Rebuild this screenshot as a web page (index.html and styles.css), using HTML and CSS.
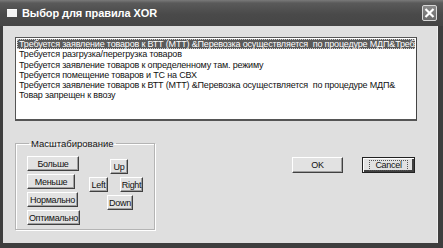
FILE: index.html
```html
<!DOCTYPE html>
<html lang="ru">
<head>
    <meta charset="UTF-8">
    <meta name="viewport" content="width=device-width, initial-scale=1.0">
    <title>Выбор для правила XOR</title>
    <link rel="stylesheet" href="styles.css">
</head>
<body>
    <div class="window">
        <div class="titlebar">
            <span class="app-icon"></span>
            <span class="title">Выбор для правила XOR</span>
            <div class="close">
                <svg width="11" height="10" viewBox="0 0 11 10">
                    <path d="M1.5 1 L9.5 9 M9.5 1 L1.5 9" stroke="#fff" stroke-width="2.2" fill="none"/>
                </svg>
            </div>
        </div>

        <div class="body">
            <ul class="list">
                <li class="selected">Требуется заявление товаров к ВТТ (МТТ) &amp;Перевозка осуществляется&nbsp; по процедуре МДП&amp;Треб</li>
                <li>Требуется разгрузка/перегрузка товаров</li>
                <li>Требуется заявление товаров к определенному там. режиму</li>
                <li>Требуется помещение товаров и ТС на СВХ</li>
                <li>Требуется заявление товаров к ВТТ (МТТ) &amp;Перевозка осуществляется&nbsp; по процедуре МДП&amp;</li>
                <li>Товар запрещен к ввозу</li>
            </ul>

            <div class="bottom">
                <fieldset class="group">
                    <legend>Масштабирование</legend>
                    <div class="zoom-btns">
                        <div class="btn w-more">Больше</div>
                        <div class="btn w-less">Меньше</div>
                        <div class="btn w-norm">Нормально</div>
                        <div class="btn w-opt">Оптимально</div>
                    </div>
                    <div class="arrows">
                        <div class="btn up">Up</div>
                        <div class="arrow-row">
                            <div class="btn left">Left</div>
                            <div class="btn right">Right</div>
                        </div>
                        <div class="btn down">Down</div>
                    </div>
                </fieldset>

                <div class="actions">
                    <div class="btn ok">OK</div>
                    <div class="btn cancel"><span class="focus">Cancel</span></div>
                </div>
            </div>
        </div>
    </div>
</body>
</html>
```

FILE: styles.css
```css
body {
    margin: 0;
    padding: 0;
    background: #3a3a3a;
    font-family: "Liberation Sans", Arial, sans-serif;
}
.window {
    width: 443px;
    height: 248px;
    box-sizing: border-box;
    background: #3e3e3e;
    padding: 0 5px 5px 3px;
    display: flex;
    flex-direction: column;
}
.titlebar {
    height: 26px;
    margin: 0 -5px 0 -3px;
    padding: 0 5px 0 7px;
    display: flex;
    align-items: center;
    background: linear-gradient(#7a7a7a 0, #5a5a5a 3px, #4a4a4a 14px, #454545 100%);
    color: #fff;
}
.app-icon {
    width: 10px;
    height: 7px;
    background: #f4f4f4;
    border-top: 1px solid #fff;
    margin-right: 5px;
}
.title {
    font-weight: bold;
    font-size: 11px;
    letter-spacing: -0.1px;
    flex: 1;
}
.close {
    width: 15px;
    height: 16px;
    box-sizing: border-box;
    border: 1px solid #d8d8d8;
    border-radius: 2px;
    background: linear-gradient(#8a8a8a, #6a6a6a);
    display: flex;
    align-items: center;
    justify-content: center;
    margin-right: 1px;
}
.body {
    flex: 1;
    background: #dfdfdf;
    border-right: 1px solid #efefef;
    padding: 11px 20px 0 12px;
}
.list {
    list-style: none;
    margin: 0;
    padding: 1px 1px;
    height: 84px;
    box-sizing: border-box;
    background: #fff;
    border: 1px solid #555;
    border-right-color: #444;
    border-bottom: 2px solid #555;
    font-size: 9px;
    letter-spacing: -0.17px;
}
.list li {
    height: 10.3px;
    line-height: 10.3px;
    padding-left: 2px;
    white-space: nowrap;
    overflow: hidden;
    color: #111;
}
.list li.selected {
    background: #5a5a5a;
    color: #fff;
    outline: 1px dotted #ccc;
    outline-offset: -1px;
}
.bottom {
    display: flex;
    margin-top: 17px;
}
.group {
    margin: 0;
    width: 140px;
    height: 92px;
    box-sizing: border-box;
    border: 1px solid #b4b4b4;
    box-shadow: inset 1px 1px #fff, 1px 1px #fff;
    padding: 7px 0 0 11px;
    display: flex;
    gap: 9px;
    font-size: 9.5px;
}
.group legend {
    padding: 0 2px;
    margin-left: 2px;
    color: #111;
}
.btn {
    box-sizing: border-box;
    height: 15px;
    border: 1px solid;
    border-color: #fff #404040 #404040 #fff;
    box-shadow: inset -1px -1px #a0a0a0;
    background: #e2e2e2;
    color: #111;
    font-size: 9px;
    letter-spacing: -0.3px;
    white-space: nowrap;
    display: flex;
    align-items: center;
    justify-content: center;
}
.zoom-btns {
    display: flex;
    flex-direction: column;
    gap: 3px;
}
.w-more { width: 52px; }
.w-less { width: 48px; }
.w-norm { width: 51px; }
.w-opt { width: 53px; }
.arrows {
    display: flex;
    flex-direction: column;
    gap: 3px;
    padding-top: 3px;
}
.arrow-row {
    display: flex;
    gap: 12px;
}
.up { width: 18px; margin-left: 21px; }
.left { width: 19px; }
.right { width: 23px; }
.down { width: 26px; margin-left: 18px; }
.actions {
    display: flex;
    gap: 19px;
    margin: 19px 0 0 137px;
}
.ok {
    width: 51px;
    height: 16px;
}
.cancel {
    width: 53px;
    height: 16px;
    border-color: #222;
    box-shadow: inset 1px 1px #fff, inset -2px -2px #404040;
}
.cancel .focus {
    border: 1px dotted #555;
    padding: 0 5px;
    line-height: 9px;
}
```
